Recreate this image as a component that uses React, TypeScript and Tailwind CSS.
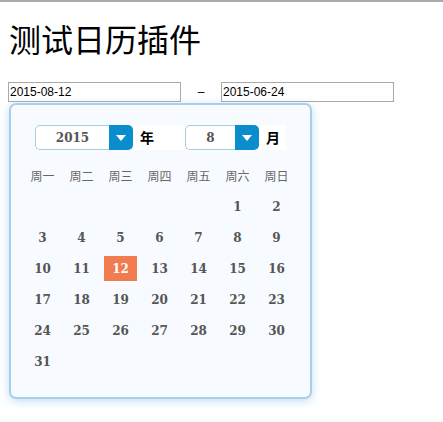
const weekdays = ['周一', '周二', '周三', '周四', '周五', '周六', '周日']

// August 2015 starts on a Saturday
const days: (number | null)[] = [null, null, null, null, null, ...Array.from({ length: 31 }, (_, i) => i + 1)]
const selected = 12

function Select({ value, width }: { value: string; width: string }) {
  return (
    <div className={`flex h-[25px] ${width}`}>
      <div className="flex flex-1 items-center justify-center rounded-l-[5px] border border-r-0 border-[#a6cfdc] bg-white text-[12px] font-bold text-[#555] [font-family:'DejaVu_Serif',serif]">
        {value}
      </div>
      <div className="flex w-[24px] items-center justify-center rounded-r-[5px] bg-[#0b8dcd]">
        <svg width="10" height="6" viewBox="0 0 10 6">
          <path d="M0 0h10L5 6z" fill="#fff" />
        </svg>
      </div>
    </div>
  )
}

export default function App() {
  return (
    <div className="min-h-[422px] bg-white border-t-2 border-[#aaa] [font-family:'Liberation_Sans','Noto_Sans_CJK_SC',sans-serif]">
      <h1 className="ml-[9px] mt-[19px] text-[32px] leading-[40px] text-black [font-family:'Liberation_Serif','Noto_Sans_CJK_SC',serif]">
        测试日历插件
      </h1>

      <div className="mt-[21px] flex items-center pl-[8px]">
        <input
          readOnly
          value="2015-08-12"
          className="h-[20px] w-[173px] border border-[#a9a9a9] px-[1px] text-[12px] text-black outline-none"
        />
        <span className="w-[40px] text-center text-[12px] text-black">–</span>
        <input
          readOnly
          value="2015-06-24"
          className="h-[20px] w-[173px] border border-[#a9a9a9] px-[1px] text-[12px] text-black outline-none"
        />
      </div>

      <div className="ml-[9px] mt-[1px] w-[303px] rounded-[7px] border-2 border-[#a9d0ea] bg-[#f7fbff] pt-[20px] pb-[20px] pl-[12px] shadow-[0_2px_10px_rgba(120,180,230,0.45)]">
        <div className="ml-[12px] flex w-[251px] items-center bg-white">
          <Select value="2015" width="w-[98px]" />
          <span className="ml-[7px] text-[14px] font-bold text-black [font-family:'Noto_Sans_CJK_SC',sans-serif]">年</span>
          <div className="ml-[31px]">
            <Select value="8" width="w-[74px]" />
          </div>
          <span className="ml-[7px] text-[14px] font-bold text-black [font-family:'Noto_Sans_CJK_SC',sans-serif]">月</span>
        </div>

        <div className="mt-[10px] grid w-[273px] grid-cols-7">
          {weekdays.map((w) => (
            <div key={w} className="flex h-[31px] items-center justify-center text-[12px] text-[#666] [font-family:'Noto_Sans_CJK_SC',sans-serif]">
              {w}
            </div>
          ))}
          {days.map((d, i) => (
            <div key={i} className="flex h-[31px] items-center justify-center">
              {d !== null && (
                <span
                  className={`flex h-[25px] w-[33px] items-center justify-center text-[12px] font-bold [font-family:'DejaVu_Serif',serif] ${
                    d === selected ? 'bg-[#f07c50] text-white' : 'text-[#555]'
                  }`}
                >
                  {d}
                </span>
              )}
            </div>
          ))}
        </div>
      </div>
    </div>
  )
}
